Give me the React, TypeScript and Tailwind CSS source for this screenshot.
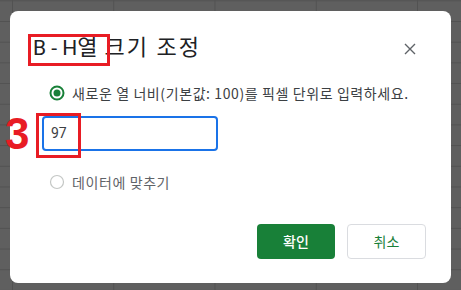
import React from "react";

function RadioOn() {
  return (
    <svg width="16" height="16" viewBox="0 0 16 16" className="shrink-0">
      <circle cx="8" cy="8" r="6.5" fill="none" stroke="#188038" strokeWidth="2" />
      <circle cx="8" cy="8" r="3.5" fill="#188038" />
    </svg>
  );
}

function RadioOff() {
  return (
    <svg width="16" height="16" viewBox="0 0 16 16" className="shrink-0">
      <circle cx="8" cy="8" r="6.5" fill="#fff" stroke="#c4c7c5" strokeWidth="1.2" />
    </svg>
  );
}

export default function App() {
  return (
    <div
      className="relative w-[461px] h-[290px] overflow-hidden bg-[#5f5f5f] bg-[linear-gradient(to_right,#525252_1px,transparent_1px),linear-gradient(to_bottom,#525252_1px,transparent_1px)] [background-size:101.25px_20.7px] [background-position:12px_0.3px] pt-[11px] pl-[10px]"
      style={{ fontFamily: '"Noto Sans CJK KR", "Noto Sans", sans-serif' }}
    >
      <div className="w-[441px] h-[272px] bg-white rounded-[8px] flex flex-col pt-[20px] pl-[23px] pr-[35px]">
        <div className="flex items-center justify-between h-[34px]">
          <div
            className="text-[22px] leading-[30px] text-[#202124] whitespace-nowrap"
            style={{ fontFamily: 'Roboto, "Noto Sans CJK KR", sans-serif' }}
          >
            <span className="text-[21px]">B - H</span>
            <span className="tracking-[2px]">열</span>
            <span className="tracking-[2px] ml-[5px]">크기 조정</span>
          </div>
          <svg width="12" height="12" viewBox="0 0 12 12" className="mt-[1px]">
            <path d="M1 1 L11 11 M11 1 L1 11" stroke="#5f6368" strokeWidth="1.4" />
          </svg>
        </div>

        <div className="flex items-center gap-[7px] mt-[18px] pl-[16px] h-[20px]">
          <RadioOn />
          <span className="text-[14px] tracking-[0.6px] text-[#3c4043] whitespace-nowrap">
            새로운 열 너비(기본값: 100)를 픽셀 단위로 입력하세요.
          </span>
        </div>

        <div className="mt-[13px] ml-[9px] w-[176px] h-[35px] border-2 border-[#1a73e8] rounded-[4px] flex items-center pl-[7px]">
          <span className="text-[14px] text-[#3c4043]" style={{ fontFamily: 'Roboto, sans-serif' }}>97</span>
        </div>

        <div className="flex items-center gap-[7px] mt-[21px] pl-[16px] h-[20px]">
          <RadioOff />
          <span className="text-[14px] tracking-[0.6px] text-[#5f6368] whitespace-nowrap">데이터에 맞추기</span>
        </div>

        <div className="flex justify-end gap-[12px] mt-[32px] mr-[-10px]">
          <div className="w-[78px] h-[35px] rounded-[4px] bg-[#188038] text-white text-[14px] font-medium flex items-center justify-center">
            확인
          </div>
          <div className="w-[79px] h-[35px] rounded-[4px] bg-white border border-[#dadce0] text-[#188038] text-[14px] flex items-center justify-center">
            취소
          </div>
        </div>
      </div>

      {/* red annotations */}
      <div className="absolute left-[28px] top-[34px] w-[82px] h-[32px] border-[3px] border-[#e81c24]" />
      <div className="absolute left-[36px] top-[113px] w-[45px] h-[45px] border-[3px] border-[#e81c24]" />
      <div
        className="absolute left-[5px] top-[108px] text-[44px] leading-[52px] font-bold text-[#e81c24]"
        style={{ fontFamily: '"Liberation Sans", Arial, sans-serif' }}
      >
        3
      </div>
    </div>
  );
}
